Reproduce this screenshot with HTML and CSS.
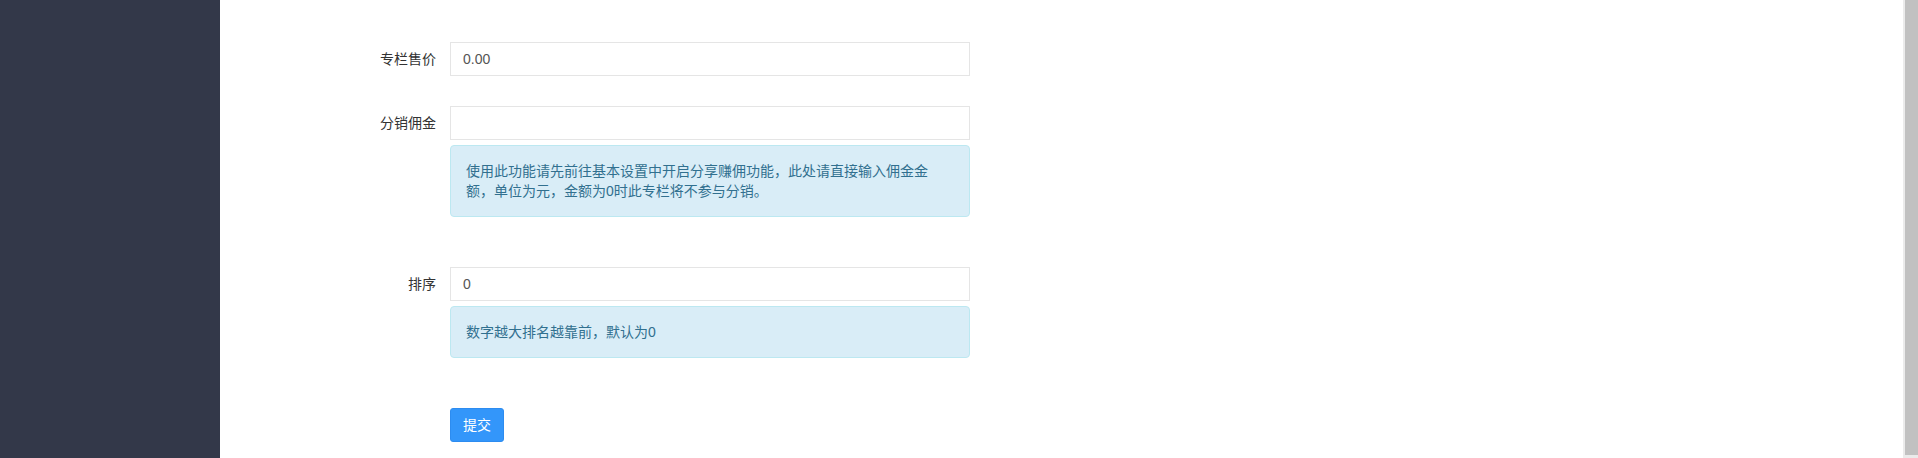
FILE: index.html
```html
<html>
    <head>
        <meta charset="utf-8">
        <link rel="stylesheet" href="styles.css">
    </head>
    <body>
        <div class="sidebar"></div>

        <div class="main">
            <form class="form">
                <div class="form-group">
                    <label class="form-label">专栏售价</label>
                    <div class="form-field">
                        <input class="form-input" type="text" value="0.00">
                    </div>
                </div>

                <div class="form-group">
                    <label class="form-label">分销佣金</label>
                    <div class="form-field">
                        <input class="form-input" type="text" value="">
                        <div class="alert">使用此功能请先前往基本设置中开启分享赚佣功能，此处请直接输入佣金金额，单位为元，金额为0时此专栏将不参与分销。</div>
                    </div>
                </div>

                <div class="form-group">
                    <label class="form-label">排序</label>
                    <div class="form-field">
                        <input class="form-input" type="text" value="0">
                        <div class="alert">数字越大排名越靠前，默认为0</div>
                    </div>
                </div>

                <div class="form-group">
                    <span></span>
                    <div class="form-field">
                        <button class="btn" type="button">提交</button>
                    </div>
                </div>
            </form>
        </div>

        <!-- page scrollbar -->
        <div class="scrollbar">
            <div class="scrollbar-thumb"></div>
        </div>
    </body>
</html>
```

FILE: styles.css
```css
html, body {
    height: 100%;
    overflow: hidden;
}
body {
    margin: 0;
    display: flex;
    font-family: "Liberation Sans", "Noto Sans CJK SC", sans-serif;
    font-size: 14px;
    color: #333;
    background-color: #fff;
}

.sidebar {
    width: 220px;
    flex-shrink: 0;
    background-color: #333849;
}

.main {
    flex: 1;
}

.form {
    margin: 0;
    padding: 42px 0 0 16px;
}
.form-group {
    display: grid;
    grid-template-columns: 200px 520px;
    column-gap: 14px;
    margin-bottom: 30px;
}
.form-label {
    text-align: right;
    line-height: 20px;
    padding-top: 7px;
}
.form-input {
    display: block;
    box-sizing: border-box;
    width: 520px;
    height: 34px;
    margin: 0;
    padding: 6px 12px;
    border: 1px solid #e5e5e5;
    border-radius: 0;
    outline: none;
    font-family: inherit;
    font-size: 14px;
    color: #555;
    background-color: #fff;
}

.alert {
    margin: 5px 0 20px;
    padding: 15px 30px 15px 15px;
    line-height: 20px;
    border: 1px solid #bce8f1;
    border-radius: 4px;
    background-color: #d9edf7;
    color: #31708f;
}

.btn {
    height: 34px;
    padding: 0 12px;
    border: 1px solid #2d8cf0;
    border-radius: 3px;
    background-color: #3396fa;
    color: #fff;
    font-family: inherit;
    font-size: 14px;
    line-height: 20px;
}

.scrollbar {
    width: 15px;
    flex-shrink: 0;
    background-color: #ebebeb;
}
.scrollbar-thumb {
    height: 455px;
    margin-left: 2px;
    background-color: #c1c1c1;
}
```
